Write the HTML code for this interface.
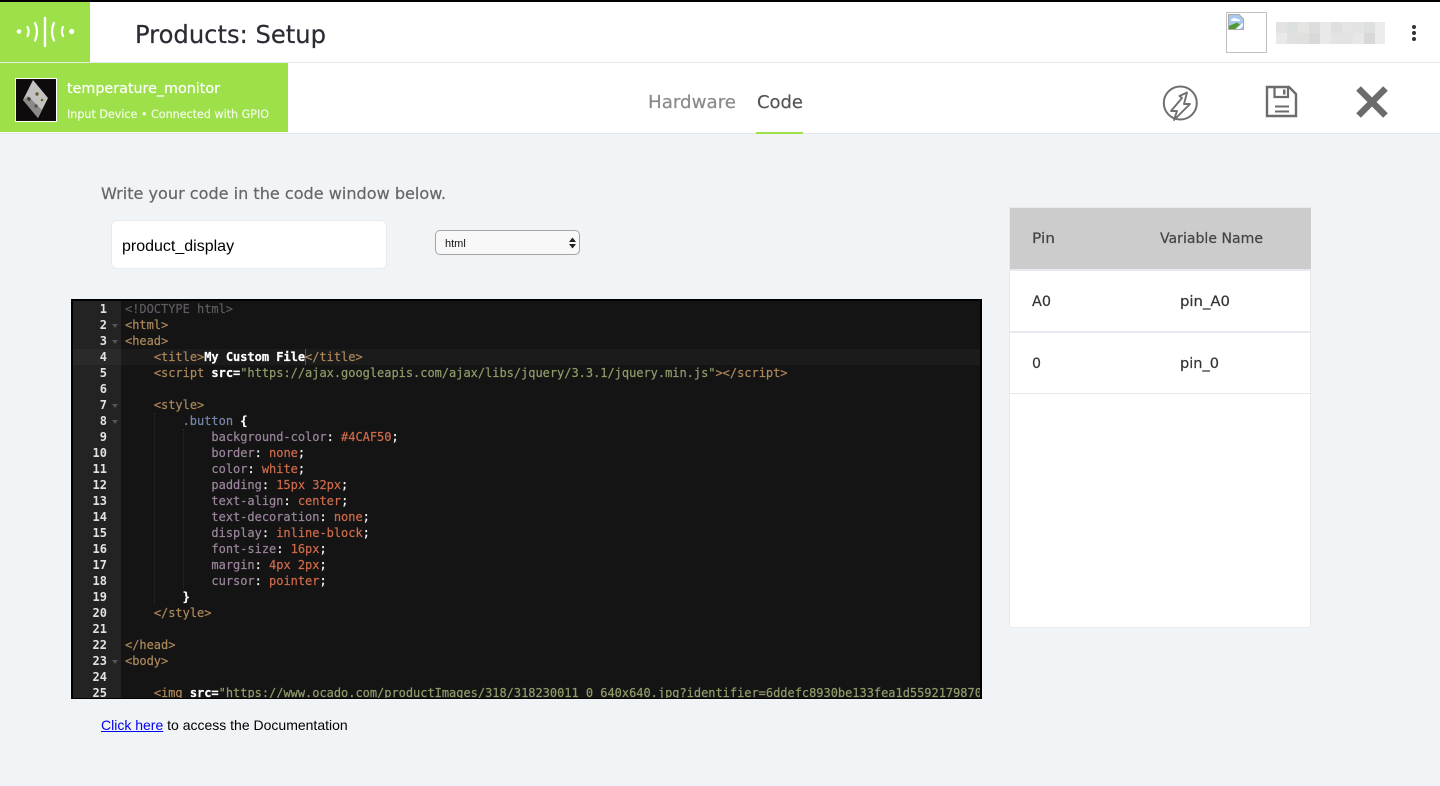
<!DOCTYPE html>
<html><head><meta charset="utf-8"><title>Products: Setup</title>
<style>
html,body{margin:0;padding:0;width:1440px;height:786px;overflow:hidden;background:#f1f4f7;font-family:"Liberation Sans",sans-serif}
.a{position:absolute}
#ed{left:71px;top:299px;width:907px;height:397px;border:2px solid #000;border-bottom-width:1px;background:#141414;overflow:hidden}
#gut{left:0;top:0;width:48px;height:400px;background:#232323}
.n{position:absolute;left:4px;width:30px;text-align:right;font:bold 12px/16px "DejaVu Sans Mono",monospace;color:#e2e2e2}
.f{position:absolute;left:39px;width:0;height:0;border-left:3px solid transparent;border-right:3px solid transparent;border-top:4px solid #555}
pre{position:absolute;left:52px;top:2px;margin:0;font:12px/16px "DejaVu Sans Mono",monospace;letter-spacing:-.024px;color:#f8f8f8;white-space:pre;-webkit-text-stroke:.2px}
.t{color:#ac885b}.s{color:#8f9d6a}.c{color:#5f5a60}.p{color:#9b859d}.v{color:#cf6a4c}.k{color:#7587a6}.w{color:#fff;font-weight:bold}
svg text{font-family:"DejaVu Sans",sans-serif;fill:currentColor;stroke:currentColor;stroke-width:.2}
</style></head><body>
<div class="a" style="left:0;top:0;width:1440px;height:2px;background:#000"></div>
<div class="a" style="left:0;top:2px;width:1440px;height:60px;background:#fff"></div>
<div class="a" style="left:0;top:2px;width:90px;height:60px;background:#9de04a"></div>
<div class="a" style="left:0;top:62px;width:1440px;height:1px;background:#e6e8ea"></div>
<div class="a" style="left:0;top:63px;width:1440px;height:70px;background:#fff"></div>
<div class="a" style="left:0;top:63px;width:288px;height:69px;background:#9de04a"></div>
<div class="a" style="left:0;top:133px;width:1440px;height:1px;background:#e3e6ea"></div>
<div class="a" style="left:756px;top:132px;width:47px;height:2px;background:#9de04a"></div>

<div class="a" style="left:1226px;top:12px;width:39px;height:39px;border:1px solid #c0c0c0;background:#fff"></div>

<div class="a" style="left:111px;top:220px;width:274px;height:47px;background:#fff;border:1px solid #e8ebee;border-radius:6px"></div>
<div class="a" style="left:122px;top:236px;font-size:16px;line-height:18px;color:#000;margin-top:2px">product_display</div>
<div class="a" style="left:435px;top:230px;width:143px;height:23px;background:#f8f8f8;border:1px solid #a5a5a5;border-radius:5px"></div>
<div class="a" style="left:445px;top:238px;font-size:11px;line-height:13px;color:#111">html</div>

<div class="a" id="ed">
<div class="a" id="gut"></div>
<div class="a" style="left:0;top:48px;width:48px;height:16px;background:#2a2a2a"></div>
<div class="a" style="left:48px;top:48px;width:870px;height:16px;background:#1b1b1b"></div>
<div class="a" style="left:81px;top:112px;height:192px;border-left:1px dotted #2b2b2b"></div>
<div class="a" style="left:110px;top:128px;height:160px;border-left:1px dotted #2b2b2b"></div>
<div class="a" style="left:232px;top:48px;width:1px;height:16px;background:#555"></div>
<div class="n" style="top:0">1</div><div class="n" style="top:16px">2</div><div class="n" style="top:32px">3</div><div class="n" style="top:48px">4</div><div class="n" style="top:64px">5</div><div class="n" style="top:80px">6</div><div class="n" style="top:96px">7</div><div class="n" style="top:112px">8</div><div class="n" style="top:128px">9</div><div class="n" style="top:144px">10</div><div class="n" style="top:160px">11</div><div class="n" style="top:176px">12</div><div class="n" style="top:192px">13</div><div class="n" style="top:208px">14</div><div class="n" style="top:224px">15</div><div class="n" style="top:240px">16</div><div class="n" style="top:256px">17</div><div class="n" style="top:272px">18</div><div class="n" style="top:288px">19</div><div class="n" style="top:304px">20</div><div class="n" style="top:320px">21</div><div class="n" style="top:336px">22</div><div class="n" style="top:352px">23</div><div class="n" style="top:368px">24</div><div class="n" style="top:384px">25</div>
<div class="f" style="top:23px"></div><div class="f" style="top:39px"></div><div class="f" style="top:103px"></div><div class="f" style="top:119px"></div><div class="f" style="top:359px"></div>
<pre style="top:0"><span class="c">&lt;!DOCTYPE html&gt;</span>
<span class="t">&lt;html&gt;</span>
<span class="t">&lt;head&gt;</span>
    <span class="t">&lt;title&gt;</span><span class="w">My Custom File</span><span class="t">&lt;/title&gt;</span>
    <span class="t">&lt;script</span> <span class="w">src=</span><span class="s">"https://ajax.googleapis.com/ajax/libs/jquery/3.3.1/jquery.min.js"</span><span class="t">&gt;&lt;/script&gt;</span>

    <span class="t">&lt;style&gt;</span>
        <span class="k">.button</span> <span class="w">{</span>
            <span class="p">background-color</span>: <span class="v">#4CAF50</span>;
            <span class="p">border</span>: <span class="v">none</span>;
            <span class="p">color</span>: <span class="v">white</span>;
            <span class="p">padding</span>: <span class="v">15px 32px</span>;
            <span class="p">text-align</span>: <span class="v">center</span>;
            <span class="p">text-decoration</span>: <span class="v">none</span>;
            <span class="p">display</span>: <span class="v">inline-block</span>;
            <span class="p">font-size</span>: <span class="v">16px</span>;
            <span class="p">margin</span>: <span class="v">4px 2px</span>;
            <span class="p">cursor</span>: <span class="v">pointer</span>;
        <span class="w">}</span>
    <span class="t">&lt;/style&gt;</span>

<span class="t">&lt;/head&gt;</span>
<span class="t">&lt;body&gt;</span>

    <span class="t">&lt;img</span> <span class="w">src=</span><span class="s">"https://www.ocado.com/productImages/318/318230011_0_640x640.jpg?identifier=6ddefc8930be133fea1d5592179870</span></pre>
</div>

<div class="a" style="left:101px;top:717px;font-size:14px;line-height:16px;color:#000"><span style="color:#00e;text-decoration:underline">Click here</span> to access the Documentation</div>

<div class="a" style="left:1009px;top:207px;width:300px;height:419px;background:#fff;border:1px solid #e8eaee;border-radius:0 0 3px 3px"></div>
<div class="a" style="left:1010px;top:208px;width:301px;height:61px;background:#ccc"></div>
<div class="a" style="left:1010px;top:269px;width:301px;height:2px;background:#e8e9ee"></div>
<div class="a" style="left:1010px;top:331px;width:301px;height:2px;background:#e8e9ee"></div>
<div class="a" style="left:1010px;top:393px;width:301px;height:1px;background:#e8e9ee"></div>

<svg class="a" style="left:0;top:0" width="1440" height="786" viewBox="0 0 1440 786">
<g fill="none" stroke="#fff" stroke-width="2.2" stroke-linecap="round">
<path d="M27.500 27Q29.800 31.500 27.500 36"/><path d="M35 23Q39 31.500 35 40.500"/><path d="M45 18V46" stroke-width="2.400"/><path d="M54 23Q50 31.500 54 40.500"/><path d="M63 27Q60.800 31.500 63 36"/>
</g>
<circle cx="19" cy="31.500" r="2.300" fill="#fff"/><circle cx="71.700" cy="31.500" r="2.600" fill="#fff"/>

<text x="135" y="43" font-size="25" style="color:#2b2b33" textLength="191" lengthAdjust="spacingAndGlyphs">Products: Setup</text>
<text x="67" y="93" font-size="14" style="color:#fff" textLength="153" lengthAdjust="spacingAndGlyphs">temperature_monitor</text>
<text x="67" y="118" font-size="11.500" style="color:#f2fae6" textLength="202" lengthAdjust="spacingAndGlyphs">Input Device • Connected with GPIO</text>
<text x="648" y="108" font-size="18" style="color:#8a8a8a" textLength="88" lengthAdjust="spacingAndGlyphs">Hardware</text>
<text x="757" y="108" font-size="18" style="color:#555" textLength="46" lengthAdjust="spacingAndGlyphs">Code</text>
<text x="101" y="199" font-size="16" style="color:#666" textLength="345" lengthAdjust="spacingAndGlyphs">Write your code in the code window below.</text>
<text x="1032" y="243" font-size="14" style="color:#444" textLength="23" lengthAdjust="spacingAndGlyphs">Pin</text>
<text x="1160" y="243" font-size="14" style="color:#444" textLength="103" lengthAdjust="spacingAndGlyphs">Variable Name</text>
<text x="1032" y="306" font-size="14" style="color:#333" textLength="19" lengthAdjust="spacingAndGlyphs">A0</text>
<text x="1180" y="306" font-size="14" style="color:#333" textLength="50" lengthAdjust="spacingAndGlyphs">pin_A0</text>
<text x="1032" y="368" font-size="14" style="color:#333" textLength="9" lengthAdjust="spacingAndGlyphs">0</text>
<text x="1180" y="368" font-size="14" style="color:#333" textLength="39" lengthAdjust="spacingAndGlyphs">pin_0</text>

<!-- thumbnail -->
<rect x="15.500" y="78.500" width="41" height="43" fill="#0d0b0c" stroke="#fff"/>
<path d="M33 80L48 98L38 118L23 100Z" fill="#c4c2be"/>
<path d="M23 100L38 118L42 110L28 96Z" fill="#8c8a86"/>
<circle cx="37" cy="94" r="1.700" fill="#6b5a30"/><circle cx="29" cy="99" r="1.700" fill="#3a3a3a"/><circle cx="36" cy="106" r="1.800" fill="#555"/><circle cx="42" cy="100" r="1.300" fill="#7a6530"/>

<!-- broken image -->
<path d="M1228.500 14.500H1239L1243.500 19V29.500H1228.500Z" fill="#a9c9f0" stroke="#a9a9a9"/>
<path d="M1231 20Q1234 16.500 1237 19Q1240 19 1240 21H1231Z" fill="#fff"/>
<path d="M1229 29V26L1237 22.500L1240 24.500L1235 29Z" fill="#4e9a2e"/>
<path d="M1236 29L1243 23V26L1239.500 29Z" fill="#fff"/>

<!-- blurred name -->
<g>
<rect x="1276" y="22" width="11" height="11" fill="#e2e3e2"/><rect x="1287" y="22" width="11" height="11" fill="#dce0df"/><rect x="1298" y="22" width="11" height="11" fill="#e5e6e4"/><rect x="1309" y="22" width="11" height="11" fill="#dcdddc"/><rect x="1320" y="22" width="11" height="11" fill="#e9e9e9"/><rect x="1331" y="22" width="11" height="11" fill="#dde0df"/><rect x="1342" y="22" width="11" height="11" fill="#e5e5e5"/><rect x="1353" y="22" width="11" height="11" fill="#e3e3e3"/><rect x="1364" y="22" width="11" height="11" fill="#dedfdf"/><rect x="1375" y="22" width="10" height="11" fill="#ebebeb"/>
<rect x="1276" y="33" width="11" height="11" fill="#e9e9e9"/><rect x="1287" y="33" width="11" height="11" fill="#dfe2e0"/><rect x="1298" y="33" width="11" height="11" fill="#e0e1df"/><rect x="1309" y="33" width="11" height="11" fill="#d8d9d8"/><rect x="1320" y="33" width="11" height="11" fill="#e9e9e9"/><rect x="1331" y="33" width="11" height="11" fill="#e3e3e3"/><rect x="1342" y="33" width="11" height="11" fill="#e3e3e3"/><rect x="1353" y="33" width="11" height="11" fill="#e7e7e6"/><rect x="1364" y="33" width="11" height="11" fill="#d7d8d7"/><rect x="1375" y="33" width="10" height="11" fill="#ececec"/>
</g>

<!-- kebab -->
<circle cx="1414" cy="27" r="2" fill="#333"/><circle cx="1414" cy="33" r="2" fill="#333"/><circle cx="1414" cy="39" r="2" fill="#333"/>

<!-- power -->
<circle cx="1180.300" cy="103" r="16.500" fill="#fff" stroke="#6f6f6f" stroke-width="2"/>
<path d="M1187 92.500L1179.500 96L1182 98L1171 111H1177L1174 120L1190 104H1184Z" fill="#fff" stroke="#6f6f6f" stroke-width="1.900" stroke-linejoin="round"/>

<!-- save -->
<path d="M1267 87H1289L1296 94V116H1267Z" fill="#fff" stroke="#6c6c6c" stroke-width="2.400"/>
<path d="M1274.500 87V97H1288V87" fill="none" stroke="#6c6c6c" stroke-width="2.200"/>
<rect x="1283" y="89.500" width="2.500" height="5" fill="#6c6c6c"/>
<path d="M1275 106.500H1289M1275 111.500H1289" stroke="#6c6c6c" stroke-width="2"/>

<!-- close -->
<path d="M1358.500 88.500L1385.500 115.500M1385.500 88.500L1358.500 115.500" stroke="#6b6b6b" stroke-width="6.500"/>

<!-- select arrows -->
<path d="M572.500 237.500L576 242H569Z" fill="#222"/><path d="M569 244H576L572.500 248.500Z" fill="#222"/>
</svg>
</body></html>
